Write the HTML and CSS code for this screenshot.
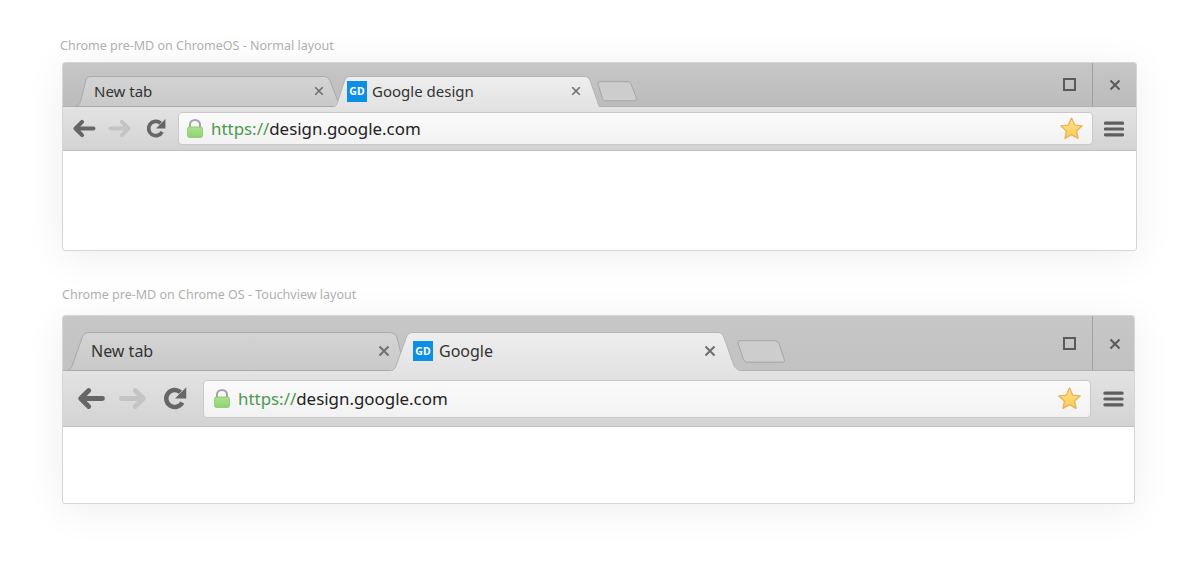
FILE: index.html
```html
<!DOCTYPE html>
<html lang="en">

<head>
    <meta charset="UTF-8">
    <title>Chrome pre-MD on Chrome OS</title>
    <link rel="stylesheet" href="styles.css">
</head>

<body>
    <!-- Shared icons and gradients -->
    <svg class="defs" width="0" height="0" aria-hidden="true">
        <defs>
            <linearGradient id="tab-off" x1="0" y1="0" x2="0" y2="1">
                <stop offset="0" stop-color="#d4d4d4"/>
                <stop offset="1" stop-color="#c9c9c9"/>
            </linearGradient>
            <linearGradient id="tab-on" x1="0" y1="0" x2="0" y2="1">
                <stop offset="0" stop-color="#eeeeee"/>
                <stop offset="1" stop-color="#e3e3e3"/>
            </linearGradient>
            <linearGradient id="lock-fill" x1="0" y1="0" x2="0" y2="1">
                <stop offset="0" stop-color="#a9e28c"/>
                <stop offset="1" stop-color="#90d373"/>
            </linearGradient>
            <linearGradient id="star-fill" x1="0" y1="0" x2="0" y2="1">
                <stop offset="0" stop-color="#ffe685"/>
                <stop offset="1" stop-color="#fdc855"/>
            </linearGradient>
            <symbol id="i-close" viewBox="0 0 12 12">
                <path d="M1.5 1.5l9 9M10.5 1.5l-9 9" fill="none" stroke="currentColor" stroke-width="2"/>
            </symbol>
            <symbol id="i-arrow" viewBox="0 0 24 20">
                <path d="M10 3L3 10l7 7M4 10h18" fill="none" stroke="currentColor" stroke-width="4.2" stroke-linecap="round" stroke-linejoin="round"/>
            </symbol>
            <symbol id="i-reload" viewBox="0 0 20 20">
                <path d="M15.8 13.200A6.800 6.800 0 1 1 14.400 5" fill="none" stroke="currentColor" stroke-width="3.600"/>
                <path d="M19 1v9h-9z" fill="currentColor"/>
            </symbol>
            <symbol id="i-lock" viewBox="0 0 16 19">
                <path d="M3 9V5.500a5 4.500 0 0 1 10 0V9" fill="none" stroke="#a4a4a4" stroke-width="2"/>
                <rect x="0.6" y="8" width="14.800" height="10.400" rx="1.600" fill="url(#lock-fill)" stroke="#86c46b" stroke-width="0.8"/>
            </symbol>
            <symbol id="i-star" viewBox="0 0 24 24">
                <path d="M12 2l3 6.700 7.200.8-5.400 4.900 1.500 7.100L12 17.900l-6.300 3.600 1.500-7.100L1.800 9.500l7.200-.8z" fill="url(#star-fill)" stroke="#e8b35c" stroke-width="1.300" stroke-linejoin="round"/>
            </symbol>
            <symbol id="i-menu" viewBox="0 0 20 16">
                <path d="M1.400 2.200h17.200M1.400 8h17.200M1.400 13.800h17.200" fill="none" stroke="currentColor" stroke-width="3.200" stroke-linecap="round"/>
            </symbol>
        </defs>
    </svg>

    <p class="caption">Chrome pre-MD on ChromeOS - Normal layout</p>
    <div class="window normal">
        <div class="tabstrip">
            <div class="tab tab-first">
                <svg class="tab-shape" width="265" height="31" viewBox="0 0 265 31">
                    <path d="M0 30.500C3 30 4.500 28.500 5.500 25.500L11 4C12 1.500 13.500.5 16 .5H249C252 .5 254 2 255 4.500L265 30.500Z" fill="url(#tab-off)" stroke="#a9a9a9"/>
                </svg>
                <span class="tab-title">New tab</span>
                <svg class="tab-close"><use href="#i-close"/></svg>
            </div>
            <div class="tab tab-active">
                <svg class="tab-shape" width="267" height="31" viewBox="0 0 267 31">
                    <path d="M0 31C2.500 30.500 3.500 29 4.500 26.500L11.500 5C12.500 2 14 .5 17 .5H251C254 .5 256 2 257 4.500L264 24C265 28.500 266 30.500 267 31" fill="url(#tab-on)" stroke="#b4b4b4"/>
                </svg>
                <span class="favicon">GD</span>
                <span class="tab-title">Google design</span>
                <svg class="tab-close"><use href="#i-close"/></svg>
            </div>
            <svg class="new-tab" width="40" height="21" viewBox="0 0 40 21">
                <path d="M1 3C.7 1.500 1.500.7 3 .7H30C32 .7 33 1.500 34 3L39.300 16.500C40 18.500 39 19.800 37 19.800H9C7 19.800 6 19 5.500 17.500Z" fill="#cdcdcd" stroke="#a6a6a6"/>
            </svg>
            <div class="controls">
                <div class="control"><span class="maximize"></span></div>
                <div class="control control-close"><svg class="window-close"><use href="#i-close"/></svg></div>
            </div>
        </div>
        <div class="toolbar">
            <svg class="nav-btn"><use href="#i-arrow"/></svg>
            <svg class="nav-btn nav-off flip"><use href="#i-arrow"/></svg>
            <svg class="nav-btn reload"><use href="#i-reload"/></svg>
            <div class="omnibox">
                <svg class="lock"><use href="#i-lock"/></svg>
                <span class="url"><span class="scheme">https://</span>design.google.com</span>
                <svg class="star"><use href="#i-star"/></svg>
            </div>
            <svg class="menu"><use href="#i-menu"/></svg>
        </div>
        <div class="content"></div>
    </div>

    <p class="caption">Chrome pre-MD on Chrome OS - Touchview layout</p>
    <div class="window touch">
        <div class="tabstrip">
            <div class="tab tab-first">
                <svg class="tab-shape" width="338" height="39" viewBox="0 0 338 39">
                    <path d="M0 38.500C2.500 38 4 36.500 5.500 33L15 6C16.500 2 18.500 .5 22 .5H322C326 .5 329 2 330 5.500L338 38.500Z" fill="url(#tab-off)" stroke="#a9a9a9"/>
                </svg>
                <span class="tab-title">New tab</span>
                <svg class="tab-close"><use href="#i-close"/></svg>
            </div>
            <div class="tab tab-active">
                <svg class="tab-shape" width="352" height="39" viewBox="0 0 352 39">
                    <path d="M0 39C3 38.500 5 37 6 34L16 6C17 2.500 19.500 .5 23 .5H328C331.500 .5 333 2.500 334 5.500L343 31C344.500 36 347.500 38.500 352 39" fill="url(#tab-on)" stroke="#b4b4b4"/>
                </svg>
                <span class="favicon">GD</span>
                <span class="tab-title">Google</span>
                <svg class="tab-close"><use href="#i-close"/></svg>
            </div>
            <svg class="new-tab" width="48" height="23" viewBox="0 0 48 23">
                <path d="M1 3C.5 1.500 1.500.7 3 .7H37C39.500 .7 41 1.500 42 3.500L47.300 19.500C47.800 21.300 47 22.200 45 22.200H11C9 22.200 7.500 21.500 6.500 19.500Z" fill="#cdcdcd" stroke="#a6a6a6"/>
            </svg>
            <div class="controls">
                <div class="control"><span class="maximize"></span></div>
                <div class="control control-close"><svg class="window-close"><use href="#i-close"/></svg></div>
            </div>
        </div>
        <div class="toolbar">
            <svg class="nav-btn"><use href="#i-arrow"/></svg>
            <svg class="nav-btn nav-off flip"><use href="#i-arrow"/></svg>
            <svg class="nav-btn reload"><use href="#i-reload"/></svg>
            <div class="omnibox">
                <svg class="lock"><use href="#i-lock"/></svg>
                <span class="url"><span class="scheme">https://</span>design.google.com</span>
                <svg class="star"><use href="#i-star"/></svg>
            </div>
            <svg class="menu"><use href="#i-menu"/></svg>
        </div>
        <div class="content"></div>
    </div>
</body>

</html>
```

FILE: styles.css
```css
body {
    font-family: "Noto Sans", "Open Sans", sans-serif;
    margin: 0;
    padding: 38px 0 0 60px;
    height: 562px;
    box-sizing: border-box;
    overflow: hidden;
    background-color: white;
}

.defs {
    position: absolute;
}

.caption {
    margin: 0 0 8px;
    font-size: 12.5px;
    line-height: 16px;
    color: #b0b0b0;
}

.window {
    margin-left: 2px;
    background-color: white;
    border: 1px solid #d6d6d6;
    border-radius: 3px;
    box-sizing: border-box;
    height: 189px;
    box-shadow: 0 6px 40px rgba(0, 0, 0, 0.07);
    overflow: hidden;
}

.normal {
    width: 1075px;
    margin-bottom: 36px;
}

.touch {
    width: 1073px;
}

.normal + .caption {
    margin-left: 2px;
    margin-bottom: 12px;
}

/* Tab strip */
.tabstrip {
    display: flex;
    align-items: flex-end;
    background: linear-gradient(#c6c6c6, #bcbcbc);
    border-bottom: 1px solid #b2b2b2;
    box-sizing: border-box;
}

.normal .tabstrip {
    height: 44px;
    padding-left: 12px;
}

.touch .tabstrip {
    height: 55px;
    padding-left: 4px;
    background: linear-gradient(#c7c7c7, #c2c2c2);
}

.tab {
    position: relative;
    display: flex;
    align-items: center;
    box-sizing: border-box;
    flex: none;
    margin-bottom: -1px;
}

.tab > * {
    position: relative;
}

.tab .tab-shape {
    position: absolute;
    left: 0;
    top: 0;
}

.tab-title {
    color: #333;
    white-space: nowrap;
}

.tab-active {
    z-index: 1;
}

.tab-close {
    margin-left: auto;
    color: #6f6f6f;
}

.favicon {
    flex: none;
    background-color: #0b8fe6;
    color: white;
    font-weight: 700;
    text-align: center;
}

.normal .tab {
    height: 31px;
    font-size: 15px;
}

.normal .tab-first {
    width: 265px;
    padding: 0 16px 1px 19px;
}

.normal .tab-active {
    width: 267px;
    margin-left: -7px;
    padding: 0 19px 1px 14px;
}

.normal .tab-close {
    width: 10px;
    height: 10px;
}

.normal .favicon {
    width: 20px;
    height: 21px;
    margin-right: 5px;
    font-size: 10.5px;
    line-height: 21px;
}

.normal .new-tab {
    margin: 0 0 4px -3px;
    position: relative;
    z-index: 2;
}

.touch .tab {
    height: 39px;
    font-size: 16px;
}

.touch .tab-first {
    width: 338px;
    padding: 0 15px 1px 24px;
}

.touch .tab-active {
    width: 352px;
    margin-left: -15px;
    padding: 0 26px 1px 23px;
}

.touch .tab-close {
    width: 12px;
    height: 12px;
}

.touch .favicon {
    width: 20px;
    height: 20px;
    margin-right: 6px;
    font-size: 10.5px;
    line-height: 20px;
}

.touch .new-tab {
    margin: 0 0 7px -5px;
    position: relative;
    z-index: 2;
}

.controls {
    display: flex;
    align-self: stretch;
    margin-left: auto;
}

.touch .controls {
    box-sizing: border-box;
}

.control {
    display: flex;
    align-items: center;
    justify-content: center;
    width: 46px;
}

.touch .control {
    padding-top: 1px;
}

.control-close {
    width: 44px;
    box-sizing: border-box;
    border-left: 1px solid #a0a0a0;
}

.touch .control-close {
    width: 42px;
    padding-left: 2px;
}

.maximize {
    width: 13px;
    height: 13px;
    box-sizing: border-box;
    border: 2px solid #5a5a5a;
}

.window-close {
    width: 12px;
    height: 12px;
    color: #5a5a5a;
}

/* Toolbar */
.toolbar {
    display: flex;
    align-items: center;
    background: linear-gradient(#e3e3e3, #d3d3d3);
    border-bottom: 1px solid #c0c0c0;
    box-sizing: border-box;
}

.normal .toolbar {
    height: 44px;
    padding-left: 3px;
}

.touch .toolbar {
    height: 56px;
    padding-left: 7px;
}

.nav-btn {
    flex: none;
    color: #666;
}

.nav-off {
    color: #c4c4c4;
}

.flip {
    transform: scaleX(-1);
}

.normal .nav-btn {
    width: 36px;
    height: 19px;
}

.touch .nav-btn {
    width: 42px;
    height: 23px;
}

.normal .reload {
    height: 21px;
}

.touch .reload {
    height: 25px;
}

.omnibox {
    display: flex;
    align-items: center;
    flex: none;
    box-sizing: border-box;
    background: linear-gradient(#fafafa, #f2f2f2);
    border: 1px solid #c9c9c9;
    border-radius: 4px;
}

.normal .omnibox {
    width: 915px;
    height: 33px;
    margin-left: 4px;
    padding: 0 8px 0 8px;
}

.touch .omnibox {
    width: 888px;
    height: 38px;
    margin-left: 7px;
    padding: 0 8px 0 10px;
}

.lock {
    width: 16px;
    height: 19px;
    flex: none;
    margin-right: 8px;
}

.url {
    font-size: 16.9px;
    color: #222;
    white-space: nowrap;
}

.scheme {
    color: #4c9a52;
}

.star {
    width: 25px;
    height: 25px;
    margin-left: auto;
}

.menu {
    flex: none;
    width: 20px;
    height: 16px;
    color: #5e5e5e;
}

.normal .menu {
    margin-left: 11px;
}

.touch .menu {
    margin-left: 12px;
    width: 21px;
}
```
